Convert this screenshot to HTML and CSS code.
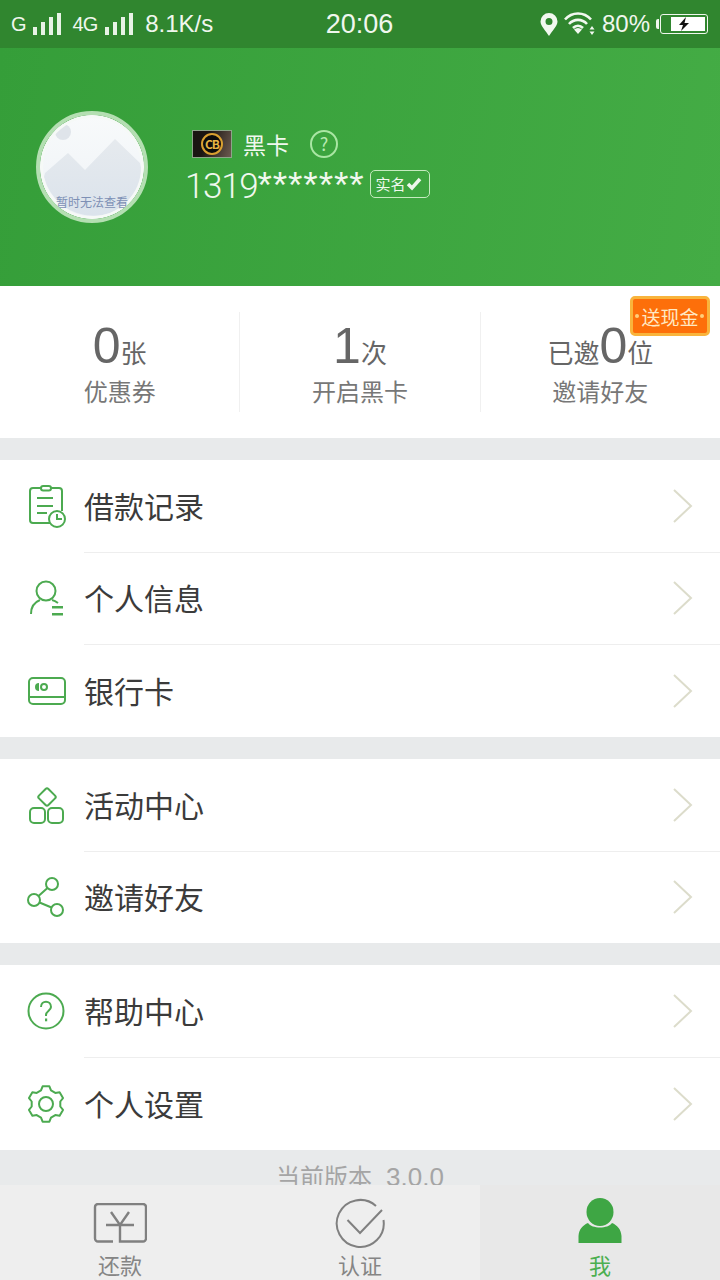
FILE: index.html
```html
<!DOCTYPE html>
<html lang="zh-CN">
<head>
    <meta charset="UTF-8">
    <meta name="viewport" content="width=device-width, initial-scale=1.0">
    <title>我的</title>
    <link rel="stylesheet" href="styles.css">
</head>
<body>
<div class="page">
    <div class="status-bar">
        <div class="status-left">
            <span class="net">G</span>
            <svg class="signal" width="28" height="22" viewBox="0 0 28 22"><path d="M0 14h4v8H0zM8 9h4v13H8zM16 4h4v18h-4zM24 0h4v22h-4z" fill="#e8f3e6"/></svg>
            <span class="net net-4g">4G</span>
            <svg class="signal" width="28" height="22" viewBox="0 0 28 22"><path d="M0 14h4v8H0zM8 9h4v13H8zM16 4h4v18h-4zM24 0h4v22h-4z" fill="#e8f3e6"/></svg>
            <span class="speed">8.1K/s</span>
        </div>
        <div class="status-time">20:06</div>
        <div class="status-right">
            <svg width="18" height="24" viewBox="0 0 18 24"><path fill-rule="evenodd" d="M9 1a8.500 8.500 0 0 1 8.500 8.500C17.500 14 12 19 9 24 6 19 .5 14 .5 9.500A8.500 8.500 0 0 1 9 1zm0 5a3.500 3.500 0 1 0 0 7 3.500 3.500 0 0 0 0-7z" fill="#f2f8f0"/></svg>
            <svg class="wifi" width="32" height="24" viewBox="0 0 32 24"><g fill="none" stroke="#f2f8f0" stroke-width="2.600"><path d="M1 7.500C8-.5 20-.5 27 7.500"/><path d="M5 12c5-5.500 13-5.500 18 0"/><path d="M9 16c3-3 7-3 10 0"/></g><path d="M14 22l-4-4.500c2.500-2 5.500-2 8 0zM28 14l2.500 3.500h-5zM28 23l-2.500-3.500h5z" fill="#f2f8f0"/></svg>
            <span class="battery-pct">80%</span>
            <div class="battery">
                <div class="battery-body">
                    <svg width="12" height="14" viewBox="0 0 12 14"><path d="M8 0L1 8h4l-2 6 8-8H6.500z" fill="#111"/></svg>
                </div>
            </div>
        </div>
    </div>

    <header class="hero">
        <div class="avatar">
            <svg width="104" height="104" viewBox="0 0 104 104">
                <defs>
                    <linearGradient id="avatarBg" x1="0" y1="0" x2="0" y2="1">
                        <stop offset="0" stop-color="#f8fafb"/>
                        <stop offset="1" stop-color="#eef2f6"/>
                    </linearGradient>
                    <linearGradient id="hill" x1="0" y1="0" x2="0" y2="1">
                        <stop offset="0" stop-color="#e6eaee"/>
                        <stop offset="1" stop-color="#dbe3ec"/>
                    </linearGradient>
                </defs>
                <circle cx="52" cy="52" r="52" fill="url(#avatarBg)"/>
                <circle cx="23" cy="17" r="8" fill="#dfe4ea"/>
                <path d="M5 58l23-20 17 17 30-31 25 24 3 14a51 51 0 0 1-99 0z" fill="url(#hill)"/>
                <circle cx="52" cy="52" r="50.500" fill="none" stroke="#f6f9f7" stroke-width="3"/>
            </svg>
            <span class="avatar-note">暂时无法查看</span>
        </div>
        <div class="user">
            <div class="user-level">
                <div class="card-badge"><span class="card-coin">CB</span></div>
                <span class="level-name">黑卡</span>
                <span class="help-dot">?</span>
            </div>
            <div class="user-phone">
                <span class="phone"><span class="phone-digits">1319</span><span class="phone-stars">*******</span></span>
                <span class="verified">实名<svg width="16" height="14" viewBox="0 0 16 14"><path d="M2 7l4 4 8-9" fill="none" stroke="#eef6ec" stroke-width="3.500"/></svg></span>
            </div>
        </div>
    </header>

    <section class="stats">
        <div class="stat">
            <div class="stat-value"><b>0</b>张</div>
            <div class="stat-label">优惠券</div>
        </div>
        <div class="stat">
            <div class="stat-value"><b>1</b>次</div>
            <div class="stat-label">开启黑卡</div>
        </div>
        <div class="stat">
            <div class="stat-value">已邀<b>0</b>位</div>
            <div class="stat-label">邀请好友</div>
            <div class="cash-tag"><i></i>送现金<i></i></div>
        </div>
    </section>

    <section class="group">
        <a class="row">
            <svg class="row-icon" width="42" height="44" viewBox="0 0 42 44"><g fill="none" stroke="#4caa50" stroke-width="2"><path d="M24 39H7a3 3 0 0 1-3-3V7a3 3 0 0 1 3-3h26a3 3 0 0 1 3 3v20"/><rect x="15" y="2" width="10" height="4.500" rx="2.200" fill="#fff"/><path d="M11 14h16M11 22h16M11 29h10"/><circle cx="31" cy="35" r="8" fill="#fff"/><path d="M31 30v5h5"/></g></svg>
            <span class="row-text">借款记录</span>
            <svg class="chevron" width="22" height="36" viewBox="0 0 22 36"><path d="M2 2l17 16L2 34" fill="none" stroke="#dcdccb" stroke-width="2"/></svg>
        </a>
        <a class="row">
            <svg class="row-icon" width="40" height="40" viewBox="0 0 40 40"><g fill="none" stroke="#4caa50" stroke-width="2"><circle cx="20" cy="13" r="9.500"/><path d="M5 36c0-7 4-12 9-14M26 22c2 .5 4 1.500 6 3"/></g><path d="M26 28h11v2.500H26zM26 35h11v2.500H26z" fill="#4caa50"/></svg>
            <span class="row-text">个人信息</span>
            <svg class="chevron" width="22" height="36" viewBox="0 0 22 36"><path d="M2 2l17 16L2 34" fill="none" stroke="#dcdccb" stroke-width="2"/></svg>
        </a>
        <a class="row row-tall">
            <svg class="row-icon" width="40" height="30" viewBox="0 0 40 30"><g fill="none" stroke="#4caa50" stroke-width="2"><rect x="3" y="2" width="36" height="26" rx="4"/><path d="M3 21h36"/><circle cx="18" cy="11" r="3"/></g><path d="M13 7a4 4 0 0 0 0 8z" fill="#4caa50"/></svg>
            <span class="row-text">银行卡</span>
            <svg class="chevron" width="22" height="36" viewBox="0 0 22 36"><path d="M2 2l17 16L2 34" fill="none" stroke="#dcdccb" stroke-width="2"/></svg>
        </a>
    </section>

    <section class="group">
        <a class="row">
            <svg class="row-icon" width="40" height="40" viewBox="0 0 40 40"><g fill="none" stroke="#4caa50" stroke-width="2"><rect x="14.300" y="5.300" width="13.400" height="13.400" rx="2" transform="rotate(45 21 12)"/><rect x="4" y="23" width="15" height="15" rx="4"/><rect x="22" y="23" width="15" height="15" rx="4"/></g></svg>
            <span class="row-text">活动中心</span>
            <svg class="chevron" width="22" height="36" viewBox="0 0 22 36"><path d="M2 2l17 16L2 34" fill="none" stroke="#dcdccb" stroke-width="2"/></svg>
        </a>
        <a class="row">
            <svg class="row-icon" width="40" height="42" viewBox="0 0 40 42"><g fill="none" stroke="#4caa50" stroke-width="2"><circle cx="26" cy="8" r="6"/><circle cx="8" cy="24" r="6"/><circle cx="31" cy="34" r="6"/><path d="M21.500 12L12.500 20M13.500 26.500l12 5"/></g></svg>
            <span class="row-text">邀请好友</span>
            <svg class="chevron" width="22" height="36" viewBox="0 0 22 36"><path d="M2 2l17 16L2 34" fill="none" stroke="#dcdccb" stroke-width="2"/></svg>
        </a>
    </section>

    <section class="group">
        <a class="row">
            <svg class="row-icon" width="40" height="40" viewBox="0 0 40 40"><circle cx="20" cy="20" r="17.500" fill="none" stroke="#4caa50" stroke-width="2"/><path d="M15 16c0-7 10-7 10 0 0 3.500-5 4-5 8v1" fill="none" stroke="#4caa50" stroke-width="2"/><path d="M19 27.500h2.200v2.800H19z" fill="#4caa50"/></svg>
            <span class="row-text">帮助中心</span>
            <svg class="chevron" width="22" height="36" viewBox="0 0 22 36"><path d="M2 2l17 16L2 34" fill="none" stroke="#dcdccb" stroke-width="2"/></svg>
        </a>
        <a class="row row-tall">
            <svg class="row-icon" width="40" height="40" viewBox="0 0 40 40"><g fill="none" stroke="#4caa50" stroke-width="2" stroke-linejoin="round"><path d="M15 6.400L16.600 2.300H23.400L25 6.400 29.300 8.900 33.600 8.200 37 14.100 34.300 17.500V22.500L37 25.900 33.600 31.800 29.300 31.100 25 33.600 23.400 37.700H16.600L15 33.600 10.700 31.100 6.400 31.800 3 25.900 5.700 22.500V17.500L3 14.100 6.400 8.200 10.700 8.900z"/><circle cx="20" cy="20" r="7"/></g></svg>
            <span class="row-text">个人设置</span>
            <svg class="chevron" width="22" height="36" viewBox="0 0 22 36"><path d="M2 2l17 16L2 34" fill="none" stroke="#dcdccb" stroke-width="2"/></svg>
        </a>
    </section>

    <div class="version">当前版本<span class="version-no">3.0.0</span></div>

    <nav class="tabs">
        <a class="tab">
            <svg class="tab-yen" width="54" height="40" viewBox="0 0 54 40"><g fill="none" stroke="#808080" stroke-width="2.400"><path d="M20 38.500H5a3 3 0 0 1-3-3V4a3 3 0 0 1 3-3h45a3 3 0 0 1 3 3v31.500a3 3 0 0 1-3 3H27V22"/><path d="M13 22h28M18 9l9 13 9-13"/></g></svg>
            <span>还款</span>
        </a>
        <a class="tab">
            <svg width="50" height="50" viewBox="0 0 50 50"><g fill="none" stroke="#808080" stroke-width="2"><path d="M41 8A23.500 23.500 0 1 0 48.500 22"/><path d="M12.500 22L25 35 47 12"/></g></svg>
            <span>认证</span>
        </a>
        <a class="tab tab-active">
            <svg width="44" height="46" viewBox="0 0 44 46"><ellipse cx="22" cy="14" rx="13.500" ry="14" fill="#3ea644"/><path d="M.5 45V38C1 31 5 27 10 25 14 31 30 31 34 25 39 27 43 31 43.500 38V45z" fill="#3ea644"/></svg>
            <span>我</span>
        </a>
    </nav>
</div>
</body>
</html>
```

FILE: styles.css
```css
* {
    box-sizing: border-box;
}
body {
    margin: 0;
    background-color: #e8eaeb;
    font-family: 'Noto Sans CJK SC', 'Noto Sans', sans-serif;
}
.page {
    width: 720px;
    height: 1280px;
    overflow: hidden;
    display: flex;
    flex-direction: column;
}

/* status bar */
.status-bar {
    height: 48px;
    flex: none;
    display: grid;
    grid-template-columns: 1fr auto 1fr;
    align-items: center;
    padding: 0 12px 0 11px;
    background-color: #30862f;
    color: #f0f7ee;
    font-family: 'Liberation Sans', sans-serif;
    font-size: 24px;
}
.status-left {
    display: flex;
    align-items: center;
}
.net {
    font-size: 20px;
    letter-spacing: -1px;
}
.net-4g {
    margin: 0 8px 0 12px;
}
.signal {
    margin-left: 7px;
}
.net-4g + .signal {
    margin-left: 0;
}
.speed {
    margin-left: 12px;
}
.status-time {
    font-size: 27px;
}
.status-right {
    display: flex;
    align-items: center;
    justify-content: flex-end;
}
.wifi {
    margin-left: 6px;
}
.battery-pct {
    margin: 0 10px 0 6px;
}
.battery {
    width: 48px;
    height: 20px;
    padding: 2px;
    border: 1px solid #f0f7ee;
    border-radius: 3px;
    position: relative;
}
.battery::before {
    content: "";
    position: absolute;
    left: -5px;
    top: 4px;
    width: 3px;
    height: 10px;
    border-radius: 2px 0 0 2px;
    background-color: #f0f7ee;
}
.battery-body {
    width: 100%;
    height: 100%;
    display: flex;
    align-items: center;
    justify-content: center;
    background: linear-gradient(90deg, #30862f 8px, #fff 8px);
}

/* green header */
.hero {
    height: 238px;
    flex: none;
    display: flex;
    align-items: flex-start;
    padding: 63px 0 0 36px;
    background: linear-gradient(100deg, #359e39, #44ac45);
    color: #f0f8ee;
}
.avatar {
    width: 112px;
    height: 112px;
    border: 4px solid #b4dfb2;
    border-radius: 50%;
    position: relative;
    overflow: hidden;
}
.avatar svg {
    display: block;
}
.avatar-note {
    position: absolute;
    left: 0;
    right: 0;
    bottom: 9px;
    text-align: center;
    font-size: 12px;
    line-height: 16px;
    white-space: nowrap;
    color: #7d90b5;
}
.user {
    margin: 19px 0 0 37px;
}
.user-level {
    height: 28px;
    display: flex;
    align-items: center;
    margin-left: 7px;
}
.card-badge {
    width: 40px;
    height: 28px;
    display: flex;
    align-items: center;
    justify-content: center;
    border: 1px solid #8ea58a;
    background: linear-gradient(110deg, #1a1512 35%, #6d5a50);
}
.card-coin {
    width: 22px;
    height: 22px;
    border-radius: 50%;
    background-color: #0c0c0c;
    border: 2px solid #d9a030;
    color: #e6b443;
    font-size: 12px;
    line-height: 18px;
    letter-spacing: -1px;
    text-align: center;
    font-weight: 700;
}
.level-name {
    margin-left: 11px;
    font-size: 23px;
}
.help-dot {
    width: 28px;
    height: 28px;
    margin-left: 21px;
    border: 2px solid #a9e6a3;
    border-radius: 50%;
    font-size: 18px;
    line-height: 23px;
    text-align: center;
    color: #b7eab1;
}
.user-phone {
    display: flex;
    align-items: center;
    margin-top: 6px;
}
.phone {
    height: 44px;
    font-family: 'Liberation Sans', sans-serif;
    font-size: 35px;
    line-height: 44px;
}
.phone-digits {
    font-family: Roboto, 'Liberation Sans', sans-serif;
    font-weight: 300;
    letter-spacing: -1.300px;
}
.phone-stars {
    font-size: 37px;
    letter-spacing: .9px;
}
.verified {
    width: 60px;
    height: 28px;
    margin: 0 0 5px 5px;
    padding-left: 5px;
    display: flex;
    align-items: center;
    border: 1px solid #c6ebc0;
    border-radius: 5px;
    font-size: 15px;
}

/* stats row */
.stats {
    height: 152px;
    flex: none;
    display: flex;
    padding-top: 26px;
    background-color: #fff;
}
.stat {
    flex: 1;
    height: 100px;
    text-align: center;
    position: relative;
    border-right: 1px solid #f0f0f0;
}
.stat:last-child {
    border-right: none;
}
.stat-value {
    height: 62px;
    font-size: 26px;
    line-height: 68px;
    color: #666;
}
.stat-value b {
    font-family: 'Liberation Sans', sans-serif;
    font-weight: 400;
    font-size: 50px;
}
.stat-label {
    font-size: 24px;
    line-height: 34px;
    color: #777;
}
.cash-tag {
    position: absolute;
    top: -16px;
    right: 10px;
    width: 80px;
    height: 40px;
    display: flex;
    align-items: center;
    justify-content: center;
    gap: 2px;
    border: 3px solid #f9b43c;
    border-radius: 5px;
    background-color: #fd6f0a;
    color: #ffe9c4;
    font-size: 19px;
}
.cash-tag i {
    width: 4px;
    height: 4px;
    border-radius: 50%;
    background-color: #ffcf7a;
}

/* menu groups */
.group {
    flex: none;
    margin-top: 22px;
    background-color: #fff;
}
.row {
    height: 92px;
    display: flex;
    align-items: center;
    position: relative;
    padding: 0 0 2px 84px;
}
.row-tall {
    height: 93px;
}
.row + .row::before {
    content: "";
    position: absolute;
    left: 84px;
    right: 0;
    top: 0;
    height: 1px;
    background-color: #eeeeee;
}
.row-icon {
    position: absolute;
    left: 26px;
    top: 50%;
    transform: translateY(-50%);
}
.row-text {
    flex: 1;
    font-size: 30px;
    color: #3b3b3b;
}
.chevron {
    margin: 2px 26px 0 0;
}

/* version and tabs */
.version {
    height: 35px;
    flex: none;
    overflow: hidden;
    text-align: center;
    font-size: 24px;
    line-height: 52px;
    color: #a5a5a5;
}
.version-no {
    margin-left: 14px;
    font-family: 'Liberation Sans', sans-serif;
    font-size: 26px;
}
.tabs {
    height: 95px;
    flex: none;
    display: flex;
    background-color: #eeeeee;
}
.tab {
    flex: 1;
    height: 95px;
    padding: 13px 0 2px;
    display: flex;
    flex-direction: column;
    align-items: center;
    justify-content: space-between;
    font-size: 22px;
    line-height: 28px;
    color: #858585;
}
.tab svg {
    flex: none;
}
.tab-yen {
    margin-top: 5px;
}
.tab-active {
    background-color: #e8e8e8;
    color: #4caf50;
}
```
